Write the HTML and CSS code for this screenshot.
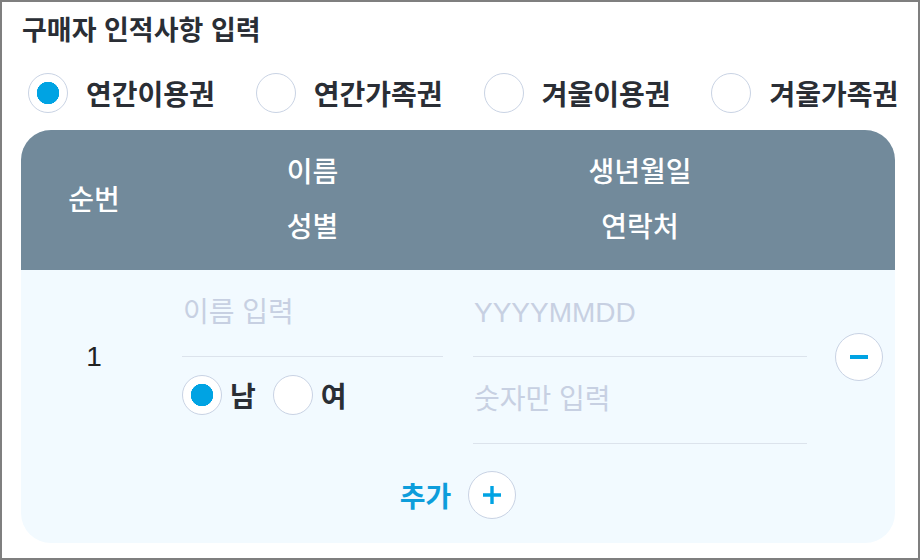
FILE: index.html
```html
<!DOCTYPE html>
<html lang="ko">
<head>
    <meta charset="UTF-8">
    <meta name="viewport" content="width=device-width, initial-scale=1.0">
    <title>구매자 인적사항 입력</title>
    <link rel="stylesheet" href="styles.css">
</head>
<body>
    <div class="frame">
        <h2 class="title">구매자 인적사항 입력</h2>
        <div class="pass-types">
            <label class="radio"><input type="radio" name="pass" checked><span>연간이용권</span></label>
            <label class="radio"><input type="radio" name="pass"><span>연간가족권</span></label>
            <label class="radio"><input type="radio" name="pass"><span>겨울이용권</span></label>
            <label class="radio"><input type="radio" name="pass"><span>겨울가족권</span></label>
        </div>
        <div class="card">
            <div class="card-head">
                <div class="col-seq">순번</div>
                <div class="col-name">
                    <div>이름</div>
                    <div>성별</div>
                </div>
                <div class="col-birth">
                    <div>생년월일</div>
                    <div>연락처</div>
                </div>
                <div class="col-action"></div>
            </div>
            <div class="card-row">
                <div class="col-seq">1</div>
                <div class="col-name">
                    <input class="field" type="text" placeholder="이름 입력">
                    <div class="gender">
                        <label class="radio small"><input type="radio" name="gender1" checked><span>남</span></label>
                        <label class="radio small"><input type="radio" name="gender1"><span>여</span></label>
                    </div>
                </div>
                <div class="col-birth">
                    <input class="field" type="text" placeholder="YYYYMMDD">
                    <input class="field" type="text" placeholder="숫자만 입력">
                </div>
                <div class="col-action">
                    <button class="circle-btn" type="button">
                        <svg width="20" height="20" viewBox="0 0 20 20"><path d="M1 10h18" stroke="#00a3e3" stroke-width="4"/></svg>
                    </button>
                </div>
            </div>
            <div class="card-add">
                <span>추가</span>
                <button class="circle-btn" type="button">
                    <svg width="20" height="20" viewBox="0 0 20 20"><path d="M1 10h18M10 1v18" stroke="#00a3e3" stroke-width="3.4"/></svg>
                </button>
            </div>
        </div>
    </div>
</body>
</html>
```

FILE: styles.css
```css
* {
    box-sizing: border-box;
}

body {
    margin: 0;
    font-family: "Liberation Sans", "Noto Sans CJK KR", sans-serif;
    color: #222;
}

.frame {
    width: 920px;
    height: 560px;
    border: 2px solid #7f7f7f;
    padding: 0 23px 0 19px;
    background: #fff;
}

.title {
    margin: 0;
    padding: 14px 0 0 1px;
    font-size: 27px;
    line-height: 30px;
    font-weight: 700;
    color: #2a2e35;
}

.pass-types {
    display: flex;
    gap: 41px;
    height: 40px;
    margin: 27px 0 17px;
    padding-left: 7px;
}

.radio {
    display: flex;
    flex-shrink: 0;
    align-items: center;
    gap: 18px;
    font-size: 28px;
    font-weight: 700;
    white-space: nowrap;
    color: #2a2e35;
    cursor: pointer;
}

.radio input {
    appearance: none;
    -webkit-appearance: none;
    flex-shrink: 0;
    margin: 0;
    width: 40px;
    height: 40px;
    border: 1px solid #c9d3e4;
    border-radius: 50%;
    background: #fff;
    cursor: pointer;
}

.radio input:checked {
    background: radial-gradient(circle, #00a3e3 0 11px, #fff 11.5px);
}

.radio.small {
    gap: 8px;
}

.card {
    border-radius: 30px;
    overflow: hidden;
    background: #f2faff;
}

.card-head,
.card-row {
    display: flex;
}

.card-head {
    background: #728a9b;
    color: #fff;
    padding: 15px 0;
    font-size: 28px;
    font-weight: 500;
    line-height: 55px;
    text-align: center;
}

.col-seq {
    width: 146px;
    margin-right: 15px;
    align-self: center;
    text-align: center;
    font-size: 28px;
}

.col-name {
    width: 261px;
    margin-right: 30px;
}

.col-birth {
    width: 334px;
}

.col-action {
    flex: 1;
    display: flex;
    justify-content: flex-end;
    align-items: center;
    padding-right: 12px;
}

.field {
    display: block;
    width: 100%;
    height: 87px;
    padding: 0 1px;
    border: none;
    border-bottom: 1px solid #dce3ec;
    background: transparent;
    font-family: inherit;
    font-size: 28px;
    color: #222;
    outline: none;
}

.field::placeholder {
    color: #c7d0e2;
}

.gender {
    display: flex;
    align-items: center;
    gap: 17px;
    height: 76px;
}

.circle-btn {
    width: 48px;
    height: 48px;
    padding: 0;
    border: 1px solid #c9d3e4;
    border-radius: 50%;
    background: #fff;
    display: flex;
    align-items: center;
    justify-content: center;
    cursor: pointer;
}

.card-add {
    display: flex;
    justify-content: center;
    align-items: center;
    gap: 17px;
    padding: 27px 0 24px;
    font-size: 28px;
    font-weight: 700;
    color: #0d9ddb;
}
```
